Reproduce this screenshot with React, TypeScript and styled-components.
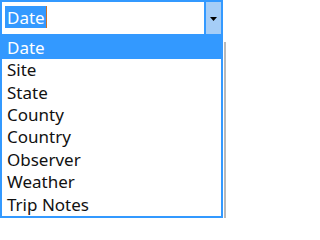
import { createGlobalStyle } from 'styled-components';
import styled from 'styled-components';

const GlobalStyle = createGlobalStyle`
  html, body {
    margin: 0;
    padding: 0;
    background: #ffffff;
  }
  body {
    font-family: 'Noto Sans', 'Open Sans', sans-serif;
    font-size: 17px;
    color: #111111;
  }
`;

const accent = '#3399ff';

const Page = styled.div`
  display: flex;
  width: 226px;
  height: 218px;
  overflow: hidden;
`;

const Dropdown = styled.div`
  display: flex;
  flex-direction: column;
  width: 223px;
`;

const ComboBox = styled.div`
  display: flex;
  height: 36px;
  box-sizing: border-box;
  border: 2px solid ${accent};
`;

const EditArea = styled.div`
  flex: 1;
  display: flex;
  align-items: flex-start;
  padding: 4px 0 0 3px;
  background: #ffffff;
`;

const Selection = styled.span`
  display: inline-block;
  height: 22px;
  line-height: 24px;
  padding: 0 1px 0 2px;
  background: ${accent};
  color: #ffffff;
  border-right: 1px solid #c8702a;
`;

const DropButton = styled.div`
  width: 17px;
  display: flex;
  align-items: center;
  justify-content: center;
  padding-top: 3px;
  box-sizing: border-box;
  background: #a5cdf7;
  border-left: 2px solid ${accent};
`;

const ListBox = styled.ul`
  list-style: none;
  margin: 0;
  padding: 0;
  border: 2px solid ${accent};
  border-top-width: 1px;
  background: #ffffff;
`;

const Option = styled.li<{ $selected?: boolean }>`
  height: 22.4px;
  line-height: 22.4px;
  padding-left: 5px;
  white-space: nowrap;
  background: ${(p) => (p.$selected ? accent : 'transparent')};
  color: ${(p) => (p.$selected ? '#ffffff' : '#111111')};
`;

const Backdrop = styled.div`
  flex: 1;
  margin-top: 42px;
  background: linear-gradient(to right, #ffffff 0, #ffffff 1px, #b9b9b9 1px);
`;

const options = ['Date', 'Site', 'State', 'County', 'Country', 'Observer', 'Weather', 'Trip Notes'];

const Arrow = () => (
  <svg width="7" height="4" viewBox="0 0 7 4">
    <path d="M0 0h7L3.5 4z" fill="#000" />
  </svg>
);

export default function App() {
  return (
    <>
      <GlobalStyle />
      <Page>
        <Dropdown>
          <ComboBox>
            <EditArea>
              <Selection>Date</Selection>
            </EditArea>
            <DropButton>
              <Arrow />
            </DropButton>
          </ComboBox>
          <ListBox>
            {options.map((o, i) => (
              <Option key={o} $selected={i === 0}>
                {o}
              </Option>
            ))}
          </ListBox>
        </Dropdown>
        <Backdrop />
      </Page>
    </>
  );
}
